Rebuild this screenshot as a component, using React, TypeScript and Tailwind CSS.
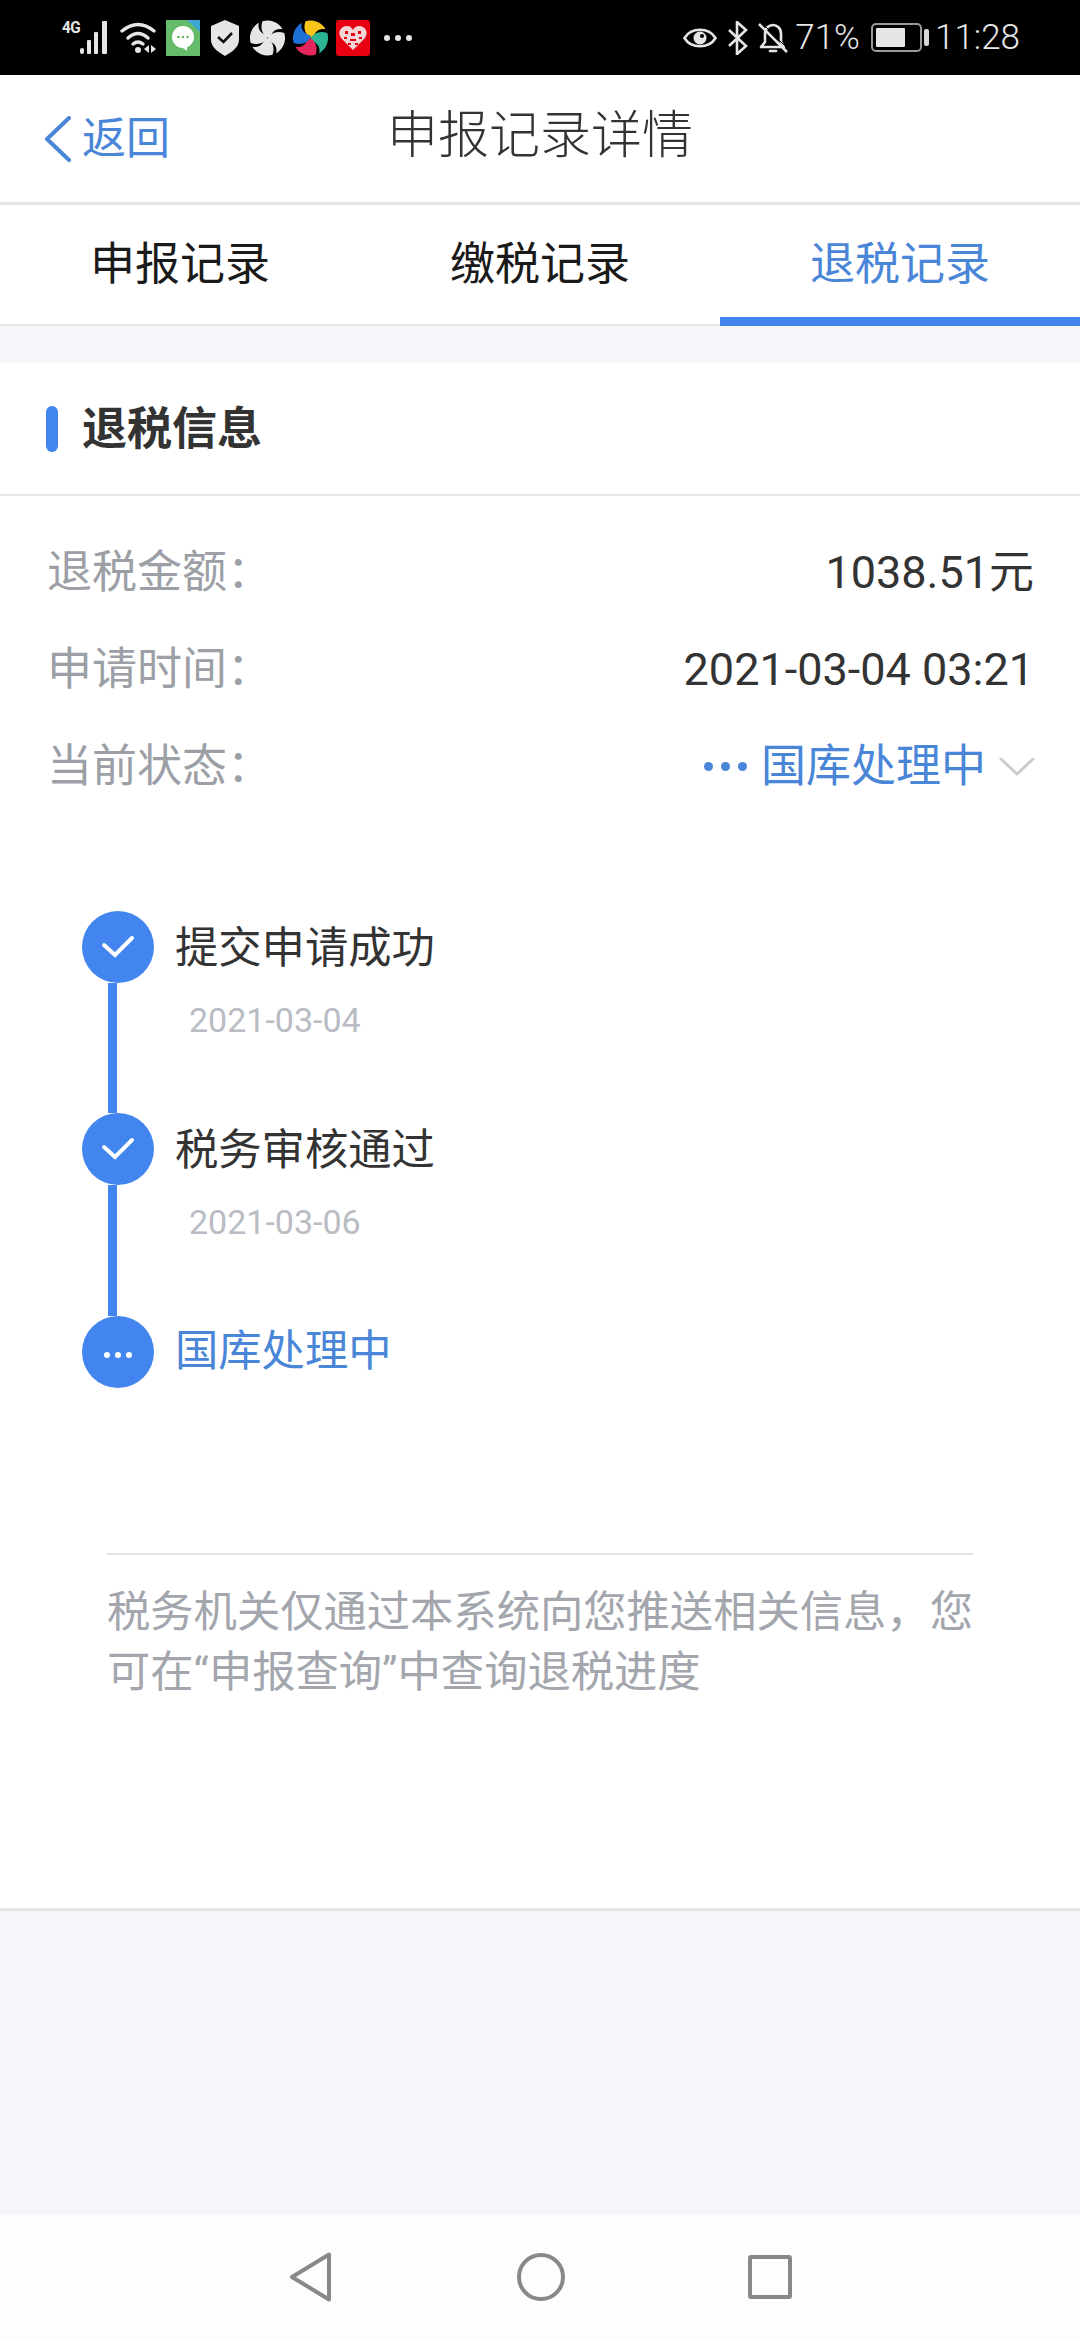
const tabs = ['申报记录', '缴税记录', '退税记录'];

const infoRows = [
  { label: '退税金额：', value: '1038.51元' },
  { label: '申请时间：', value: '2021-03-04 03:21' },
];

const steps = [
  { title: '提交申请成功', date: '2021-03-04' },
  { title: '税务审核通过', date: '2021-03-06' },
];

const blade = 'M1 -17.5 A17.5 17.5 0 0 1 17.2 -3 C11 -7 6 -4 2 1 C-3 -2 -5 -10 1 -17.5z';

const Pinwheel = ({ colors }: { colors: string[] }) => (
  <svg width="35" height="36" viewBox="-17.5 -18 35 36">
    {colors.map((color, index) => (
      <path key={index} d={blade} fill={color} transform={`rotate(${index * 90 - 20})`} />
    ))}
  </svg>
);

const StatusLeft = () => (
  <div className="flex items-center">
    <div className="relative w-[50px] h-[34px] ml-[62px]">
      <span className="absolute left-0 top-[-4px] text-[17px] leading-[20px] font-bold text-[#e6e6e6] tracking-[-0.5px] scale-x-90 origin-left">
        4G
      </span>
      <svg width="50" height="34" viewBox="0 0 50 34" className="block">
        <rect x="18" y="27" width="4" height="6" rx="2" fill="#e6e6e6" />
        <rect x="25" y="19" width="4" height="14" rx="1" fill="#e6e6e6" />
        <rect x="32" y="11" width="4" height="22" rx="1" fill="#e6e6e6" />
        <rect x="40" y="0" width="5" height="33" rx="1" fill="#e6e6e6" />
      </svg>
    </div>
    <svg width="38" height="34" viewBox="0 0 38 34" className="ml-[8px]">
      <path d="M2 10 Q18 -3 34 10" stroke="#e6e6e6" strokeWidth="3.4" fill="none" strokeLinecap="round" />
      <path d="M8 17 Q18 8 28 17" stroke="#e6e6e6" strokeWidth="3.4" fill="none" strokeLinecap="round" />
      <path d="M13 23 Q18 19 23 23" stroke="#e6e6e6" strokeWidth="3.4" fill="none" strokeLinecap="round" />
      <circle cx="18" cy="29" r="3" fill="#e6e6e6" />
      <path d="M29 24 v8 l-5 -4z M31 24 v8 l5 -4z" fill="#e6e6e6" />
    </svg>
    <svg width="34" height="36" viewBox="0 0 34 36" className="ml-[8px]">
      <rect width="34" height="36" fill="#66bb6a" />
      <path d="M21 0 L34 0 L34 12z" fill="#3fa7d6" />
      <circle cx="17" cy="17" r="11" fill="#fff" />
      <path d="M14 26 L21 27 L21 31z" fill="#fff" />
      <circle cx="12.5" cy="17" r="1.3" fill="#66bb6a" />
      <circle cx="17" cy="17" r="1.3" fill="#66bb6a" />
      <circle cx="21.5" cy="17" r="1.3" fill="#66bb6a" />
    </svg>
    <svg width="30" height="36" viewBox="0 0 30 36" className="ml-[10px]">
      <path d="M15 0 L29 6 V20 C29 28 20 33 15 36 C10 33 1 28 1 20 V6z" fill="#e6e6e6" />
      <path d="M8 17 L13.5 22 L22 13" stroke="#111" strokeWidth="2.6" fill="none" />
    </svg>
    <div className="ml-[10px]">
      <Pinwheel colors={['#e6e6e6', '#e6e6e6', '#e6e6e6', '#e6e6e6']} />
    </div>
    <div className="ml-[8px]">
      <Pinwheel colors={['#f5c518', '#2bb594', '#e5265e', '#1f70d6']} />
    </div>
    <svg width="34" height="36" viewBox="0 0 34 36" className="ml-[8px]">
      <rect width="34" height="36" rx="3" fill="#e60012" />
      <path d="M17 30 L5 18 C1 12 5 6 11 6 C14 6 16 8 17 10 C18 8 20 6 23 6 C29 6 33 12 29 18z" fill="#f4d6d6" />
      <path d="M9 11 h3 v3 h-3z M22 11 h3 v3 h-3z M15 13 h4 v3 h-4z M8 17 h3 v2 h-3z M23 17 h3 v2 h-3z M14 19 h6 v2 h-6z M12 23 h3 v2 h-3z M19 23 h3 v2 h-3z" fill="#e60012" />
    </svg>
    <div className="flex gap-[5px] ml-[14px]">
      <span className="w-[6px] h-[6px] rounded-full bg-[#e6e6e6]" />
      <span className="w-[6px] h-[6px] rounded-full bg-[#e6e6e6]" />
      <span className="w-[6px] h-[6px] rounded-full bg-[#e6e6e6]" />
    </div>
  </div>
);

const StatusRight = () => (
  <div className="flex items-center text-[#e6e6e6] mr-[60px]">
    <svg width="34" height="28" viewBox="0 0 34 28">
      <path d="M1.5 14 C8 3 26 3 32.5 14 C26 25 8 25 1.5 14z" stroke="#e6e6e6" strokeWidth="2.6" fill="none" />
      <circle cx="17" cy="14" r="6.5" fill="#e6e6e6" />
      <circle cx="19" cy="12" r="2" fill="#000" />
    </svg>
    <svg width="22" height="34" viewBox="0 0 22 34" className="ml-[10px]">
      <path d="M2 9 L19 25 L10 33 V1 L19 9 L2 25" stroke="#e6e6e6" strokeWidth="2.6" fill="none" />
    </svg>
    <svg width="30" height="34" viewBox="0 0 30 34" className="ml-[9px]">
      <path d="M3 26 H26 L23 21 V13 C23 7 19 4 15 4 C11 4 7 7 7 13 V21z" stroke="#e6e6e6" strokeWidth="2.6" fill="none" strokeLinejoin="round" />
      <path d="M12 30 H18" stroke="#e6e6e6" strokeWidth="2.6" strokeLinecap="round" />
      <path d="M1 3 L29 31" stroke="#e6e6e6" strokeWidth="2.6" />
      <path d="M1 3 L29 31" stroke="#000" strokeWidth="1" transform="translate(2,-2)" />
    </svg>
    <span className="ml-[7px] text-[35px] leading-[40px] font-light">71%</span>
    <div className="ml-[11px] w-[51px] h-[29px] border-2 border-[#9a9a9a] rounded-[5px] p-[3px]">
      <div className="h-full w-[70%] bg-[#e6e6e6] rounded-[1px]" />
    </div>
    <span className="ml-[2px] w-[5px] h-[17px] bg-[#d8d8d8] rounded-[2px]" />
    <span className="ml-[6px] text-[35px] leading-[40px] font-light">11:28</span>
  </div>
);

const Tick = () => (
  <svg width="34" height="26" viewBox="0 0 34 26">
    <path d="M3 11 L14 21 L31 4" stroke="#fff" strokeWidth="4" fill="none" strokeLinecap="round" />
  </svg>
);

const App = () => {
  return (
    <div className="w-[1080px] h-[2340px] flex flex-col overflow-hidden bg-[#f4f6fa] font-['Roboto','Noto_Sans_CJK_SC',sans-serif]">
      <div className="h-[75px] shrink-0 bg-black flex items-center justify-between">
        <StatusLeft />
        <StatusRight />
      </div>

      <div className="h-[130px] shrink-0 bg-white border-b-[3px] border-[#e6e6e6] flex items-center relative">
        <button className="flex items-center text-[#4a86d8] ml-[44px]">
          <svg width="28" height="46" viewBox="0 0 28 46" className="shrink-0">
            <path d="M25 2 L3 23 L25 44" stroke="#4a86d8" strokeWidth="4" fill="none" strokeLinecap="round" strokeLinejoin="round" />
          </svg>
          <span className="ml-[10px] text-[44px] leading-[50px]">返回</span>
        </button>
        <h1 className="absolute left-0 right-0 text-center text-[51px] leading-[60px] text-[#333] font-light pb-[5px]">
          申报记录详情
        </h1>
      </div>

      <div className="h-[121px] shrink-0 bg-white flex">
        {tabs.map((tab, index) => (
          <div
            key={tab}
            className={`flex-1 flex items-center justify-center text-[45px] box-border ${
              index === 2
                ? 'border-b-[9px] border-[#4285ee] text-[#4a86d8]'
                : 'border-b-2 border-[#e6e6e6] text-[#1a1a1a]'
            }`}
          >
            <span className={index === 2 ? 'pt-[7px]' : ''}>{tab}</span>
          </div>
        ))}
      </div>

      <div className="h-[37px] shrink-0" />

      <div className="h-[1548px] shrink-0 bg-white border-b-[3px] border-[#e2e4e8] flex flex-col">
        <div className="h-[133px] shrink-0 border-b-2 border-[#e8e8e8] flex items-center pl-[46px]">
          <span className="w-[12px] h-[46px] rounded-full bg-[#4285ee]" />
          <span className="ml-[24px] text-[45px] font-bold text-[#333] pt-[2px]">退税信息</span>
        </div>

        <div className="mt-[28px] pl-[47px] pr-[46px]">
          {infoRows.map((row) => (
            <div key={row.label} className="h-[97px] flex items-center justify-between">
              <span className="text-[45px] text-[#9c9fa6]">{row.label}</span>
              <span className="text-[45px] text-[#333]">{row.value}</span>
            </div>
          ))}
          <div className="h-[97px] flex items-center justify-between">
            <span className="text-[45px] text-[#9c9fa6]">当前状态：</span>
            <div className="flex items-center -mr-[1px]">
              <div className="flex gap-[8px]">
                <span className="w-[9px] h-[9px] rounded-full bg-[#4a86d8]" />
                <span className="w-[9px] h-[9px] rounded-full bg-[#4a86d8]" />
                <span className="w-[9px] h-[9px] rounded-full bg-[#4a86d8]" />
              </div>
              <span className="ml-[14px] text-[45px] text-[#4a86d8]">国库处理中</span>
              <svg width="36" height="20" viewBox="0 0 36 20" className="ml-[13px] shrink-0">
                <path d="M2 2 L18 17 L34 2" stroke="#cccccc" strokeWidth="3" fill="none" strokeLinecap="round" />
              </svg>
            </div>
          </div>
        </div>

        <div className="mt-[96px] ml-[82px]">
          {steps.map((step, index) => (
            <div key={step.title} className={`flex ${index === 0 ? 'h-[202px]' : 'h-[203px]'}`}>
              <div className="w-[72px] shrink-0 flex flex-col">
                <div className="w-[72px] h-[72px] shrink-0 rounded-full bg-[#4285ee] flex items-center justify-center">
                  <Tick />
                </div>
                <div className="flex-1 w-[9px] ml-[26px] bg-[#4285ee]" />
              </div>
              <div className="ml-[21px]">
                <div className="h-[72px] flex items-center text-[43.3px] text-[#333] pt-[4px]">{step.title}</div>
                <div className="mt-[17px] ml-[14px] text-[34px] leading-[40px] text-[#b9bcc2]">{step.date}</div>
              </div>
            </div>
          ))}
          <div className="flex">
            <div className="w-[72px] h-[72px] shrink-0 rounded-full bg-[#4285ee] flex items-center justify-center gap-[5px] pt-[6px]">
              <span className="w-[6px] h-[6px] rounded-full bg-white" />
              <span className="w-[6px] h-[6px] rounded-full bg-white" />
              <span className="w-[6px] h-[6px] rounded-full bg-white" />
            </div>
            <div className="ml-[21px] h-[72px] flex items-center text-[43.3px] text-[#4a86d8]">国库处理中</div>
          </div>
        </div>

        <div className="mt-[165px] mx-[107px] border-t-2 border-[#e4e4e4] pt-[28px]">
          <p className="text-[43.3px] leading-[60px] text-[#a3a6ad]">
            税务机关仅通过本系统向您推送相关信息，您可在“申报查询”中查询退税进度
          </p>
        </div>
      </div>

      <div className="flex-1" />

      <div className="h-[126px] shrink-0 bg-[#fdfdfd] flex items-center justify-center">
        <svg width="44" height="50" viewBox="0 0 44 50" className="mr-[186px]">
          <path d="M3 25 L40 2.5 V47.5z" stroke="#888" strokeWidth="4" fill="none" strokeLinejoin="round" />
        </svg>
        <span className="w-[48px] h-[48px] rounded-full border-4 border-[#888] -ml-[2px]" />
        <span className="ml-[183px] w-[44px] h-[44px] rounded-[3px] border-4 border-[#888]" />
      </div>
    </div>
  );
};

export default App;
